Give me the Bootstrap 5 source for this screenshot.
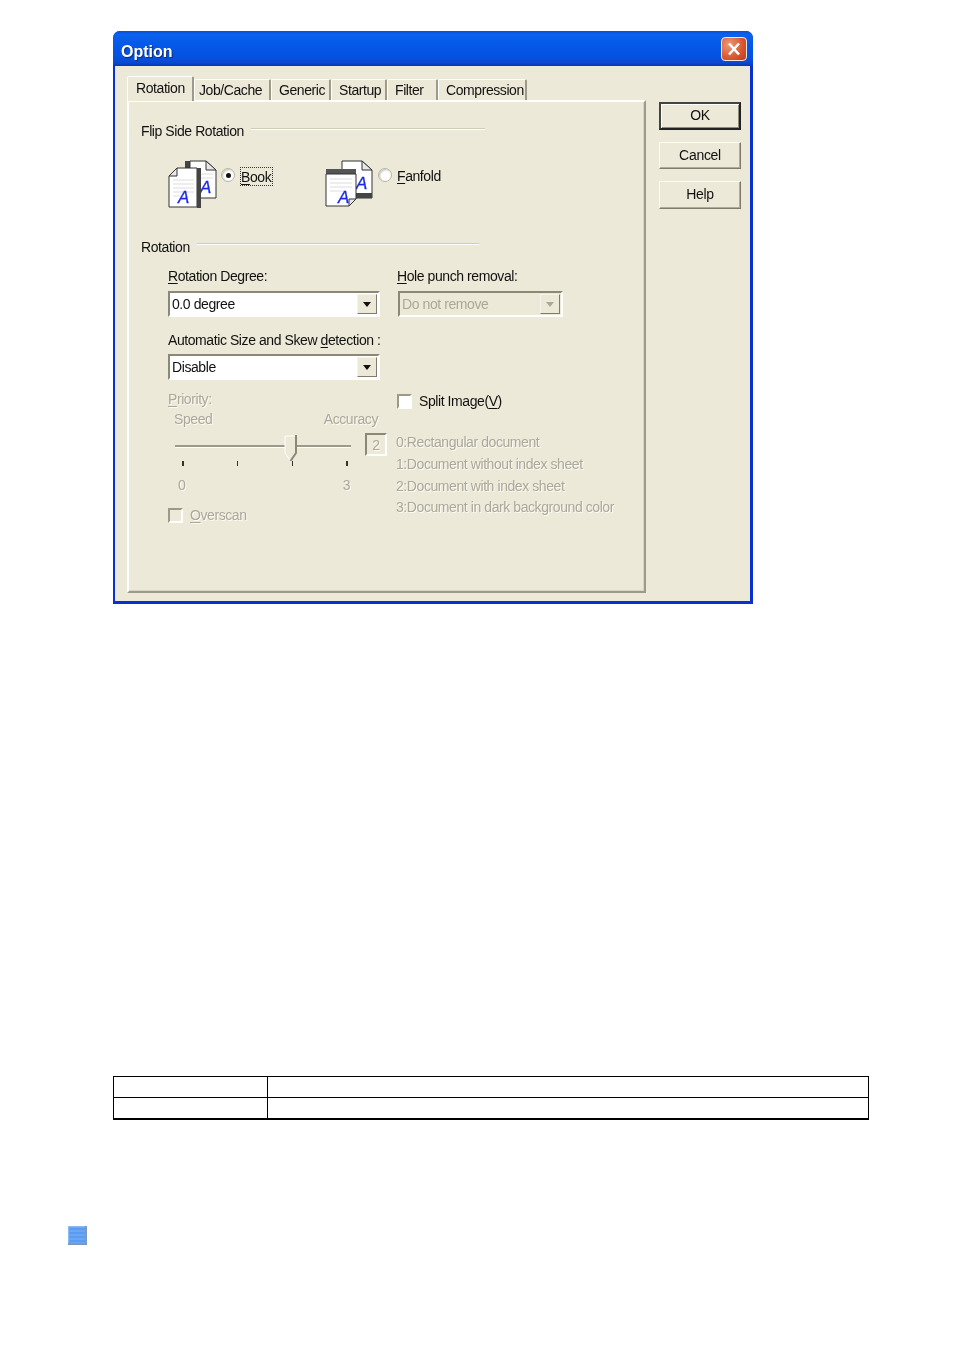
<!DOCTYPE html>
<html lang="en"><head><meta charset="utf-8"><title>Option</title>
<link rel="stylesheet" href="https://cdn.jsdelivr.net/npm/bootstrap@5.3.0/dist/css/bootstrap.min.css">
<style>
html,body{background:#fff;margin:0}
body{height:1351px;overflow:hidden;font-family:"Liberation Sans",Arial,sans-serif;font-size:14px;letter-spacing:-.42px;color:#111;line-height:18px}
.page-wrap{padding:31px 0 0 113px}
.xp-win{width:640px;height:573px;background:#0832d0;border-radius:7px 7px 0 0;padding:0 3px 3px 2px;box-sizing:border-box;filter:blur(.3px)}
.xp-title{height:35px;margin:0 -3px 0 -2px;padding:0 6px 0 8px;border-radius:7px 7px 0 0;background:linear-gradient(180deg,#0a4fd8 0,#0a62ee 10%,#0558e8 40%,#0453e2 70%,#0a4ad0 90%,#0438b8 100%);color:#fff;font-weight:700;font-size:16px;letter-spacing:0;text-shadow:1px 1px 1px #0a2a80}
.title-t{margin-top:6px}
.xp-close{width:26px;height:24px;border:1px solid #f6e8e0;border-radius:4px;background:radial-gradient(circle at 30% 30%,#ec9a78,#d8562f 60%,#bf3a1c);padding:0;margin-top:1px}
.xp-body{background:#ece9d8;height:535px;padding:10px 9px 0 12px;gap:13px}
.tab-col{width:519px;flex:none}
.nav-tabs.xp-tabs{border:0;height:25px;align-items:flex-end;flex-wrap:nowrap}
.xp-tabs .nav-link{height:21px;padding:0 0 0 7px;border:0;border-top:1px solid #fff;border-left:1px solid #fff;border-right:2px solid #9d9a89;border-radius:2px 2px 0 0;margin:0 0 1px 0;color:#111;background:#ece9d8;font-size:14px;line-height:21px;white-space:nowrap;box-sizing:border-box}
.xp-tabs .nav-link.active{height:25px;line-height:23px;padding-left:8px;border-color:#fff #9d9a89 transparent #fff;color:#111;background:#ece9d8;position:relative;z-index:1;margin-bottom:0}
.w-t1{width:67px}.xp-tabs .nav-link.w-t2{width:77px;padding-left:4px}.w-t3{width:60px}.w-t4{width:56px}.w-t5{width:51px}.w-t6{width:89px}
.xp-panel{height:493px;margin-top:-1px;border:2px solid;border-color:#fff #9d9a89 #9d9a89 #fff;padding:20px 0 0 12px;box-shadow:inset -1px -1px 0 #d8d5c4}
.grp-head{height:18px;gap:7px}
.grp-1{width:344px}.grp-2{width:338px}
.etched{flex:1;height:2px;background:#cfccba;border-bottom:1px solid #fff;align-self:flex-start;margin-top:6px}
.grp-2 .etched{margin-top:5px}
.opt-row{height:47px;margin:20px 0 31px 27px}
.opt-a{width:157px}
.pg-icon{width:50px;height:48px;flex:none}
.radio-x{width:14px;height:14px;border-radius:50%;background:#fff;border:1px solid #b8b5a6;margin:8px 0 0 3px;flex:none;box-shadow:inset 1px 1px 2px #c4c1b0;display:flex;align-items:center;justify-content:center}
.radio-x i{width:5px;height:5px;border-radius:50%;background:#111;display:block}
.focus-lbl{border:1px dotted #333;margin:7px 0 0 5px;padding:0;height:19px;width:33px;line-height:18px}
.plain-lbl{margin:7px 0 0 5px}
.uline{text-decoration:underline;text-underline-offset:2px;text-decoration-thickness:1px}
.cols{margin:6px 0 0 27px}
.col-l{width:229px}
.col-r{width:240px}
.lbl{height:18px;white-space:nowrap}
.lbl-top{margin-top:5px}
.combo{height:26px;border:2px solid;border-color:#8b8878 #fff #fff #8b8878;outline:1px solid #ece9d8;background:#fff;margin:6px 0 0 0;padding:1px 1px 1px 2px;line-height:20px;width:212px;box-sizing:border-box;font-size:14px}
.combo.second{margin-top:5px}
.combo .arr{width:20px;height:20px;background:#ece9d8;border:1px solid;border-color:#f5f3ea #7f7c6c #7f7c6c #f5f3ea;display:flex;align-items:center;justify-content:center;flex:none}
.arr i{width:0;height:0;border-left:4.5px solid transparent;border-right:4.5px solid transparent;border-top:5px solid #111;display:block}
.combo.off{width:165px;background:#ece9d8;color:#aca899;margin-left:1px;text-shadow:none}
.combo.off .arr i{border-top-color:#aca899}
.off-t{color:#aca899;text-shadow:1px 1px 0 #fbfaf5}
.auto-l{margin-top:14px}
.prio-l{margin-top:10px}
.chk{width:15px;height:15px;background:#fff;border:2px solid;border-color:#9d9a89 #fff #fff #9d9a89;flex:none;box-sizing:border-box}
.chk.off{background:#ece9d8}
.speed-row{width:204px;margin:2px 0 0 6px;height:20px}
.sl-wrap{width:176px;height:26px;margin:5px 0 0 7px;position:relative}
.track{position:absolute;left:0;right:0;top:10px;height:3px;background:#9d9a89;border-bottom:1px solid #fff}
.thumb{position:absolute;left:109px;top:0;width:13px;height:26px}
.sl-line{gap:14px;width:220px;height:30px}
.valbox{width:22px;height:23px;margin-top:3px;border:2px solid;border-color:#8b8878 #fff #fff #8b8878;text-align:center;line-height:20px;font-size:14px;box-sizing:border-box}
.ticks{width:166px;margin:1px 0 0 14px;height:8px}
.ticks i{width:1.5px;height:5px;background:#333;display:block}
.scale{width:172px;margin:7px 0 0 10px;height:18px}
.ovr{margin-top:12px;gap:7px;height:18px}
.spl{gap:7px;height:18px;margin-top:75px}
.doc-list{margin:22px 0 0 -1px}
.doc-list div{height:21.8px;line-height:20px;white-space:nowrap}
.side{width:82px;padding-top:26px;gap:12px}
.btn.xp-btn{width:82px;height:27.5px;padding:0;border-radius:0;border:1px solid;border-color:#fbfaf3 #7e7b6b #7e7b6b #fbfaf3;background:#ece9d8;color:#111;font-size:14px;letter-spacing:-.3px;line-height:24px;box-shadow:inset -1px -1px 0 #aeab9b}
.btn.xp-btn.def{border:2px solid;border-color:#444 #222 #222 #444;box-shadow:inset 1px 1px 0 #fff,inset -1px -1px 0 #8e8b7b;line-height:21px}
.btn.xp-btn.hlp{line-height:23px}
.data-tbl{width:756px;border-collapse:collapse;margin:472px 0 0 113px;table-layout:fixed}
.data-tbl td{border:1px solid #000;height:21px;padding:0}
.data-tbl td.c-first{width:154px}
.data-tbl tr:last-child td{border-bottom:2px solid #000}
.bullet{width:19px;height:19px;margin:106px 0 0 68px;background:repeating-linear-gradient(180deg,#6aa8f4 0 2px,#5c9cf0 2px 4px);box-shadow:inset -2px -2px 1px #7c98c0,inset 1px 1px 1px #8fbdf5}
.ic-a{font-family:"Liberation Sans",sans-serif;font-style:italic;font-size:17px;fill:#1a2ae8;stroke:#1a2ae8;stroke-width:.3px;letter-spacing:0}
</style></head>
<body>
<div class="page-wrap">
 <div class="xp-win">
  <div class="xp-title d-flex align-items-center justify-content-between"><span class="title-t">Option</span>
   <button class="xp-close d-flex align-items-center justify-content-center" aria-label="Close"><svg width="16" height="14" viewBox="0 0 16 14"><path d="M3 1.5 L13 12.5 M13 1.5 L3 12.5" stroke="#fff" stroke-width="2.6" fill="none"/></svg></button>
  </div>
  <div class="xp-body d-flex">
   <div class="tab-col">
    <ul class="nav nav-tabs xp-tabs">
     <li class="nav-item"><a class="nav-link active w-t1">Rotation</a></li>
     <li class="nav-item"><a class="nav-link w-t2">Job/Cache</a></li>
     <li class="nav-item"><a class="nav-link w-t3">Generic</a></li>
     <li class="nav-item"><a class="nav-link w-t4">Startup</a></li>
     <li class="nav-item"><a class="nav-link w-t5">Filter</a></li>
     <li class="nav-item"><a class="nav-link w-t6">Compression</a></li>
    </ul>
    <div class="xp-panel">
     <div class="grp-head grp-1 d-flex align-items-center"><span>Flip Side Rotation</span><span class="etched"></span></div>
     <div class="opt-row d-flex">
      <div class="opt-a d-flex">
       <svg class="pg-icon" viewBox="0 0 50 48">
        <rect x="17" y="1" width="6" height="8" fill="#444"/>
        <path d="M22 1H38L48 10V38H22Z" fill="#fff" stroke="#333"/>
        <path d="M38 1V10H48Z" fill="#e8e8e8" stroke="#333"/>
        <path d="M33 14H45M33 18H45" stroke="#ddd"/>
        <text class="ic-a" x="32" y="33">A</text>
        <path d="M1 16L9 8H29V47H1Z" fill="#fff" stroke="#333"/>
        <path d="M9 8V16H1Z" fill="#e8e8e8" stroke="#333"/>
        <rect x="29" y="8" width="4" height="40" fill="#444"/>
        <path d="M5 20H26M5 24H26M5 28H26M5 32H26M5 36H12" stroke="#ddd"/>
        <text class="ic-a" x="10" y="43">A</text>
       </svg>
       <span class="radio-x"><i></i></span>
       <span class="focus-lbl"><span class="uline">B</span>ook</span>
      </div>
      <div class="d-flex">
       <svg class="pg-icon" viewBox="0 0 50 48">
        <path d="M17 1H37L47 10V38H17Z" fill="#fff" stroke="#333"/>
        <path d="M37 1V10H47Z" fill="#e8e8e8" stroke="#333"/>
        <rect x="30" y="33" width="17" height="5" fill="#444"/>
        <text class="ic-a" x="31" y="29">A</text>
        <rect x="1" y="9" width="30" height="5" fill="#555"/>
        <path d="M1 14H31V39L24 46H1Z" fill="#fff" stroke="#333"/>
        <path d="M24 46V39H31Z" fill="#e8e8e8" stroke="#333"/>
        <path d="M5 19H27M5 23H27M5 27H27M5 31H20" stroke="#ddd"/>
        <text class="ic-a" x="13" y="43">A</text>
       </svg>
       <span class="radio-x"></span>
       <span class="plain-lbl"><span class="uline">F</span>anfold</span>
      </div>
     </div>
     <div class="grp-head grp-2 d-flex align-items-center"><span>Rotation</span><span class="etched"></span></div>
     <div class="cols d-flex">
      <div class="col-l">
       <div class="lbl lbl-top"><span class="uline">R</span>otation Degree:</div>
       <div class="combo d-flex justify-content-between"><span>0.0 degree</span><span class="arr"><i></i></span></div>
       <div class="lbl auto-l"><span>Automatic Size and Skew </span><span class="uline">d</span>etection :</div>
       <div class="combo second d-flex justify-content-between"><span>Disable</span><span class="arr"><i></i></span></div>
       <div class="lbl off-t prio-l"><span class="uline">P</span>riority:</div>
       <div class="speed-row d-flex justify-content-between off-t"><span>Speed</span><span>Accuracy</span></div>
       <div class="sl-line d-flex">
        <div class="sl-wrap"><span class="track"></span>
         <svg class="thumb" viewBox="0 0 13 26"><path d="M1 1H12V18L6.5 26L1 18Z" fill="#ece9d8" stroke="#fff"/><path d="M12 0V18L6.5 26" stroke="#8b8878" stroke-width="2" fill="none"/></svg>
        </div>
        <div class="valbox off-t">2</div>
       </div>
       <div class="ticks d-flex justify-content-between"><i></i><i></i><i></i><i></i></div>
       <div class="scale d-flex justify-content-between off-t"><span>0</span><span>3</span></div>
       <div class="ovr d-flex align-items-center off-t"><span class="chk off"></span><span><span class="uline">O</span>verscan</span></div>
      </div>
      <div class="col-r">
       <div class="lbl lbl-top"><span class="uline">H</span>ole punch removal:</div>
       <div class="combo off d-flex justify-content-between"><span>Do not remove</span><span class="arr"><i></i></span></div>
       <div class="spl d-flex align-items-center"><span class="chk"></span><span>Split Image(<span class="uline">V</span>)</span></div>
       <div class="doc-list off-t">
        <div>0:Rectangular document</div>
        <div>1:Document without index sheet</div>
        <div>2:Document with index sheet</div>
        <div>3:Document in dark background color</div>
       </div>
      </div>
     </div>
    </div>
   </div>
   <div class="side d-flex flex-column">
    <button class="btn xp-btn def">OK</button>
    <button class="btn xp-btn">Cancel</button>
    <button class="btn xp-btn hlp">Help</button>
   </div>
  </div>
 </div>
</div>
<table class="data-tbl">
 <tr><td class="c-first"></td><td></td></tr>
 <tr><td></td><td></td></tr>
</table>
<div class="bullet"></div>
</body></html>
